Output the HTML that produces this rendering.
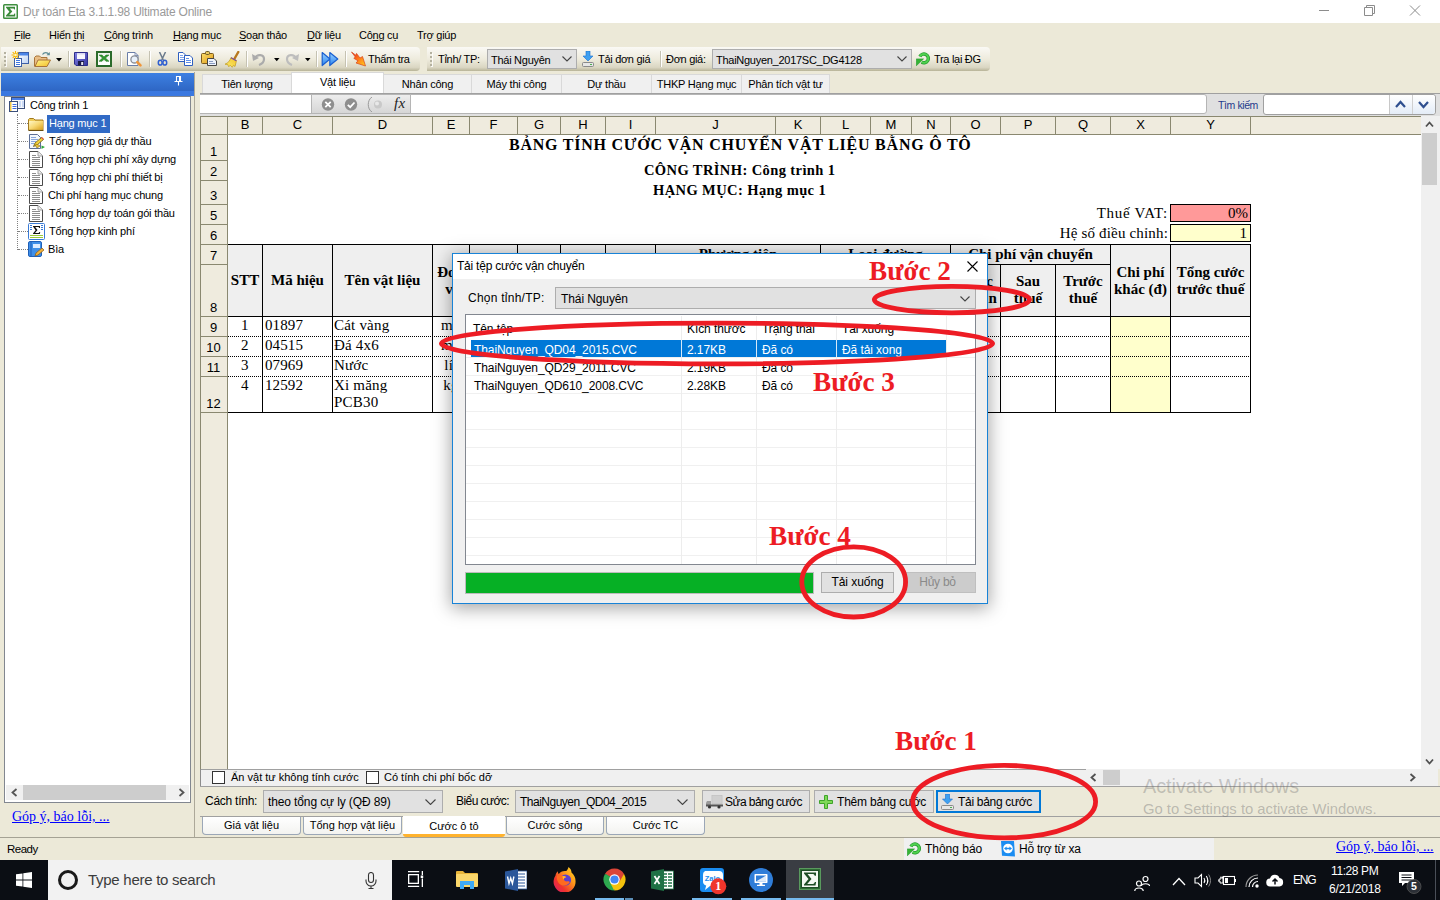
<!DOCTYPE html>
<html lang="vi">
<head>
<meta charset="utf-8">
<title>Dự toán Eta 3.1.1.98 Ultimate Online</title>
<style>
*{box-sizing:border-box;margin:0;padding:0}
html,body{width:1440px;height:900px;overflow:hidden;background:#ECE9D8;font-family:"Liberation Sans",sans-serif;font-size:11px;color:#000}
.a{position:absolute}
.t{position:absolute;white-space:nowrap;line-height:1}
.ui{font-family:"Liberation Sans",sans-serif;font-size:11px}
.seg{font-family:"DejaVu Sans","Liberation Sans",sans-serif}
.ser{font-family:"Liberation Serif",serif}
u{text-decoration:underline}
/* title bar */
#titlebar{left:0;top:0;width:1440px;height:23px;background:#fff}
/* menu */
#menubar{left:0;top:23px;width:1440px;height:24px;background:#ECE9D8}
#menubar .t{top:7px;font-size:11px;letter-spacing:-.25px}
/* toolbars */
.tb{position:absolute;top:47px;height:24px;border-radius:0 4px 4px 0;background:linear-gradient(#FAF9F5 0%,#EEEBDD 50%,#DAD6C2 85%,#B8B498 100%)}
.tbsep{position:absolute;top:4px;width:1px;height:16px;background:#C5C2B2;border-right:1px solid #fff;box-sizing:content-box}
.grip{position:absolute;left:3px;top:5px;width:2px;height:14px;background:repeating-linear-gradient(#B4B1A0 0 2px,transparent 2px 4px);box-shadow:1px 1px 0 rgba(255,255,255,.8)}
.combo{position:absolute;background:#E1E1E1;border:1px solid #ADADAD;font-size:11px;letter-spacing:-.27px;white-space:nowrap;overflow:hidden}
.combo span{position:absolute;left:3px;top:5px;line-height:1}
.combo svg{position:absolute;right:4px;top:6px}
/* left panel */
#lp-head{left:1px;top:73px;width:193px;height:18px;background:linear-gradient(#3D80E2,#2E66C4)}
#lp-strip{left:1px;top:91px;width:193px;height:5px;background:#3A78E0}
#tree{left:4px;top:96px;width:187px;height:707px;background:#fff;border:1px solid #828790}
.ti{position:absolute;white-space:nowrap;font-size:11px;line-height:1;letter-spacing:-.2px}
/* main tabs */
.mt{position:absolute;top:74px;height:19px;background:#F0F0F0;border:1px solid #D9D9D9;border-bottom:none;text-align:center;font-size:11px;line-height:18px;white-space:nowrap;letter-spacing:-.2px}
.mt.act{top:72px;height:21px;background:#fff;line-height:18px}
/* grid */
#grid{left:200px;top:116px;width:1221px;height:653px;background:#fff;box-shadow:inset 1px 1px 0 #8A8870}
.ch{position:absolute;top:0;height:18px;background:#EFEBDE;border-right:1px solid #8A8870;border-bottom:1px solid #8A8870;text-align:center;font-size:13px;line-height:18px}
.rh{position:absolute;left:0;width:28px;background:#EFEBDE;border-right:1px solid #8A8870;border-bottom:1px solid #8A8870;text-align:center;font-size:13px}
.rh span{position:absolute;left:0;right:0;bottom:2px;line-height:1}
.hc{position:absolute;background:#EFEFEF;border-right:2px solid #000;border-bottom:2px solid #000;font-family:"Liberation Serif",serif;font-weight:bold;font-size:15px;text-align:center;line-height:17px}
.dc{position:absolute;font-family:"Liberation Serif",serif;font-size:15px;line-height:1;white-space:nowrap;letter-spacing:.3px}
.vl{position:absolute;width:2px;background:#000}
.hl{position:absolute;height:2px;background:#000}
.dl{position:absolute;height:0;border-top:1px dotted #000}
/* bottom */
.bt{position:absolute;top:817px;height:18px;background:linear-gradient(#fff,#F3F3F0);border:1px solid #9BA7B7;border-top:none;border-radius:0 0 4px 4px;text-align:center;font-size:11px;line-height:17px;letter-spacing:0}
.btn{position:absolute;top:790px;height:23px;background:#E1E1E1;border:1px solid #ADADAD;font-size:11.5px;white-space:nowrap}
.b12{font-size:12px;letter-spacing:-.25px}
/* dialog */
#dlg{left:452px;top:253px;width:536px;height:351px;background:#F0F0F0;border:1px solid #1883D7;box-shadow:0 3px 17px 1px rgba(0,0,0,.36)}
.lvl{position:absolute;background:#F0F0F0}
.lr{position:absolute;font-size:12px;letter-spacing:-.08px;line-height:1;white-space:nowrap}
/* annotations */
.step{position:absolute;font-family:"Liberation Serif",serif;font-weight:bold;font-size:27.2px;color:#ED1C24;line-height:1;white-space:nowrap}
/* taskbar */
#taskbar{left:0;top:860px;width:1440px;height:40px;background:#0B0E14}
</style>
</head>
<body>
<!-- TITLE BAR -->
<div id="titlebar" class="a">
  <svg class="a" style="left:3px;top:4px" width="15" height="15" viewBox="0 0 15 15"><rect x=".75" y=".75" width="13.500" height="13.500" rx=".8" fill="#fff" stroke="#3F8F3F" stroke-width="1.500"/><path d="M3 2.800H12V5.600H11.300L10.600 4.400H6.800L9.300 7.600L6.200 10.800H10.800L11.400 9.400H12.200V12.400H3V11.500L6.400 7.700L3 3.600Z" fill="#3A8A3A"/></svg>
  <div class="t" id="wttl" style="left:23px;top:6px;font-size:12px;color:#9A9A9A;letter-spacing:-.22px">Dự toán Eta 3.1.1.98 Ultimate Online</div>
  <svg class="a" style="left:1310px;top:0" width="130" height="23" viewBox="0 0 130 23"><g stroke="#8C8C8C" stroke-width="1" fill="none"><path d="M9 10.5h10"/><path d="M54.5 7.5h8v8h-8z"/><path d="M56.5 7.5v-2h8v8h-2"/><path d="M100 5.5l10 10M110 5.5l-10 10"/></g></svg>
</div>
<!-- MENU BAR -->
<div id="menubar" class="a">
  <div class="t" style="left:14px"><u>F</u>ile</div>
  <div class="t" style="left:49px">Hiển <u>t</u>hị</div>
  <div class="t" style="left:104px"><u>C</u>ông trình</div>
  <div class="t" style="left:173px"><u>H</u>ạng mục</div>
  <div class="t" style="left:239px"><u>S</u>oạn thảo</div>
  <div class="t" style="left:307px"><u>D</u>ữ liệu</div>
  <div class="t" style="left:359px">Cô<u>n</u>g cụ</div>
  <div class="t" style="left:417px">Trợ <u>g</u>iúp</div>
</div>
<!-- TOOLBAR 1 -->
<div class="tb" style="left:1px;width:419px">
  <div class="grip"></div>
  <!-- new -->
  <svg class="a" style="left:10px;top:4px" width="18" height="16" viewBox="0 0 18 16"><defs><linearGradient id="nwg" x1="0" y1="0" x2="1" y2="1"><stop offset="0" stop-color="#fff"/><stop offset="1" stop-color="#BCD2F4"/></linearGradient></defs><rect x="7.500" y="1.500" width="10" height="11" fill="url(#nwg)" stroke="#3C5FA8"/><rect x="8" y="2" width="9" height="2.500" fill="#4C86E8"/><rect x="3.500" y="7.500" width="7" height="8" fill="#fff" stroke="#3C5FA8"/><path d="M5 9.500h4M5 11.500h4M5 13.500h4" stroke="#3F78E0"/><path d="M4.500 0v8M.5 4h8M1.700 1.200l5.600 5.600M7.300 1.200l-5.600 5.600" stroke="#F7B500" stroke-width="1.100"/><circle cx="4.500" cy="4" r="1.300" fill="#FFF6C0"/></svg>
  <!-- open -->
  <svg class="a" style="left:33px;top:4px" width="17" height="17" viewBox="0 0 17 17"><defs><linearGradient id="ofg" x1="0" y1="0" x2="1" y2="1"><stop offset="0" stop-color="#FFF48A"/><stop offset="1" stop-color="#F2BE28"/></linearGradient></defs><path d="M8.500 3.500c1.500-2.500 5-2.500 6.500 0" fill="none" stroke="#5E8C96" stroke-width="1.200"/><path d="M15.800 1v3.300h-3.300z" fill="#5E8C96"/><path d="M.5 15.500v-9l1.500-1.500h3.500l1.500 1.500h6v2.500" fill="#E9BE86" stroke="#A8743A"/><path d="M1 15.500l3-6.500h12.500l-3.500 6.500z" fill="url(#ofg)" stroke="#A8743A"/></svg>
  <svg class="a" style="left:55px;top:11px" width="6" height="4"><path d="M0 0h6l-3 3.500z" fill="#000"/></svg>
  <div class="tbsep" style="left:67px"></div>
  <!-- save -->
  <svg class="a" style="left:73px;top:5px" width="14" height="14" viewBox="0 0 14 14"><defs><linearGradient id="svg1" x1="0" y1="0" x2="1" y2="1"><stop offset="0" stop-color="#8484E6"/><stop offset="1" stop-color="#35359E"/></linearGradient></defs><path d="M.5.500h13v13h-11.500l-1.500-1.500z" fill="url(#svg1)" stroke="#2C2C8A"/><rect x="3" y="1" width="8" height="6" fill="#F7F7FD"/><rect x="3" y="1" width="8" height="1.500" fill="#D8D8F0"/><rect x="4" y="9" width="6" height="4.500" fill="#1B1B4A"/><rect x="7.200" y="10" width="2" height="3" fill="#E6E6F2"/></svg>
  <!-- excel -->
  <svg class="a" style="left:95px;top:4px" width="16" height="16" viewBox="0 0 16 16"><rect x="1" y="1" width="14" height="14" fill="#EFF6EE" stroke="#2B6B2B" stroke-width="2"/><rect x="2" y="10.500" width="12" height="3.500" fill="#fff"/><path d="M3 4h3l2 2 2-2h3l-3.500 3 3.500 3.300h-3l-2-2-2 2h-3l3.500-3.300z" fill="#2F9A2F" stroke="#1E6E1E" stroke-width=".5"/></svg>
  <div class="tbsep" style="left:119px"></div>
  <!-- preview -->
  <svg class="a" style="left:125px;top:4px" width="17" height="17" viewBox="0 0 17 17"><path d="M1.500 1.500h7.500l3 3v10h-10.500z" fill="#fff" stroke="#6A7EA8"/><path d="M9 1.500v3h3" fill="none" stroke="#6A7EA8" stroke-width=".8"/><circle cx="8.500" cy="8.400" r="3.600" fill="#E8F1FB" stroke="#8A8E96" stroke-width="1.300"/><path d="M11.300 11.200l3.200 3.200" stroke="#F0963A" stroke-width="2.600" stroke-linecap="round"/></svg>
  <div class="tbsep" style="left:148px"></div>
  <!-- cut -->
  <svg class="a" style="left:156px;top:5px" width="11" height="15" viewBox="0 0 11 15"><path d="M2.500 0l3.800 8M8.500 0l-3.800 8" stroke="#6A7A8C" stroke-width="1.500" fill="none"/><ellipse cx="3.200" cy="10.700" rx="1.900" ry="2.400" fill="none" stroke="#2F5FD0" stroke-width="1.500"/><ellipse cx="7.800" cy="10.700" rx="1.900" ry="2.400" fill="none" stroke="#2F5FD0" stroke-width="1.500"/></svg>
  <!-- copy -->
  <svg class="a" style="left:176px;top:5px" width="17" height="15" viewBox="0 0 17 15"><path d="M1.500.500h4.500l2 2v7h-6.500z" fill="#fff" stroke="#2F5FC0"/><path d="M3 3.500h3M3 5.500h4M3 7.500h4" stroke="#7FA3E8"/><path d="M7.500 3.500h5.500l2.500 2.500v7.500h-8z" fill="#fff" stroke="#2F5FC0"/><path d="M9 6.500h3M9 8.500h5M9 10.500h5" stroke="#5F8FE8"/></svg>
  <!-- paste -->
  <svg class="a" style="left:199px;top:4px" width="18" height="16" viewBox="0 0 18 16"><defs><linearGradient id="pg" x1="0" y1="0" x2="1" y2="1"><stop offset="0" stop-color="#FBDD6A"/><stop offset="1" stop-color="#DE9A1A"/></linearGradient></defs><rect x="1.500" y="2.500" width="12" height="10" rx="1" fill="url(#pg)" stroke="#7A5A1E"/><rect x="5.500" y=".5" width="4" height="3" rx="1" fill="#E8C860" stroke="#6A5A2A"/><path d="M7.500 7.500h6.500l2.500 2.500v4.500h-9z" fill="#EEF3FB" stroke="#444"/><path d="M9 10.500h4M9 12.500h6" stroke="#8A9CC0"/></svg>
  <!-- brush -->
  <svg class="a" style="left:223px;top:4px" width="17" height="17" viewBox="0 0 17 17"><defs><linearGradient id="bg1" x1="1" y1="0" x2="0" y2="1"><stop offset="0" stop-color="#F2C230"/><stop offset="1" stop-color="#FBEE6A"/></linearGradient></defs><path d="M14.300 1l-4 7" stroke="#B8781E" stroke-width="2.400" stroke-linecap="round"/><path d="M7 6.500l5.500 3-1.500 6-1.500-1.200-1.300 2-1.700-1.800-2 1-.8-2-2.700-.3c3-1 5-3.500 6-6.700z" fill="url(#bg1)" stroke="#C09A18" stroke-width=".7"/><path d="M7 6.800l5.300 2.900" stroke="#7A4AA0" stroke-width="1.300"/></svg>
  <div class="tbsep" style="left:245px"></div>
  <!-- undo -->
  <svg class="a" style="left:251px;top:5px" width="15" height="14" viewBox="0 0 15 14"><path d="M3 6c2-4 9-4 9 1 0 3-2 5-5 6" fill="none" stroke="#ABABAB" stroke-width="2.200"/><path d="M0 2l1 7 6-3z" fill="#ABABAB"/></svg>
  <svg class="a" style="left:273px;top:11px" width="6" height="4"><path d="M0 0h5.500l-2.750 3.200z" fill="#000"/></svg>
  <!-- redo -->
  <svg class="a" style="left:283px;top:5px" width="15" height="14" viewBox="0 0 15 14"><path d="M12 6c-2-4-9-4-9 1 0 3 2 5 5 6" fill="none" stroke="#BDBDBD" stroke-width="2.200"/><path d="M15 2l-1 7-6-3z" fill="#BDBDBD"/></svg>
  <svg class="a" style="left:304px;top:11px" width="6" height="4"><path d="M0 0h5.500l-2.750 3.200z" fill="#000"/></svg>
  <div class="tbsep" style="left:315px"></div>
  <!-- ff -->
  <svg class="a" style="left:320px;top:4px" width="18" height="16" viewBox="0 0 18 16"><defs><linearGradient id="ffb" x1="0" y1="0" x2="0" y2="1"><stop offset="0" stop-color="#9AD4FF"/><stop offset="1" stop-color="#2A82F0"/></linearGradient></defs><path d="M1.200 1.500l7.800 6.500-7.800 6.500z" fill="url(#ffb)" stroke="#1A5FD0" stroke-width="1.200" stroke-linejoin="round"/><path d="M8.800 1.500l8 6.500-8 6.500z" fill="url(#ffb)" stroke="#1A5FD0" stroke-width="1.200" stroke-linejoin="round"/></svg>
  <div class="tbsep" style="left:344px"></div>
  <!-- tham tra -->
  <svg class="a" style="left:349px;top:4px" width="17" height="16" viewBox="0 0 17 16"><defs><linearGradient id="ttg" x1="0" y1="0" x2="1" y2="1"><stop offset="0" stop-color="#E8281A"/><stop offset=".5" stop-color="#FF7A1A"/><stop offset="1" stop-color="#FFD21E"/></linearGradient></defs><path d="M1.500 1l4.200 3.200.8-1.800 3.500 4.600 2.500-1.500 3 9.500-9.500-3 2-2.200-4.200-2.500 1.500-1.300z" fill="url(#ttg)" stroke="#D8431A" stroke-width=".7" stroke-linejoin="round"/></svg>
  <div class="t" style="left:367px;top:7px;font-size:11px;letter-spacing:-.3px">Thẩm tra</div>
</div>
<!-- TOOLBAR 2 -->
<div class="tb" style="left:427px;width:563px">
  <div class="grip"></div>
  <div class="t" style="left:11px;top:7px;font-size:11px;letter-spacing:-.3px">Tỉnh/ TP:</div>
  <div class="combo" style="left:60px;top:2px;width:90px;height:20px"><span>Thái Nguyên</span><svg width="10" height="6" viewBox="0 0 10 6"><path d="M.5.500l4.500 4.500 4.500-4.500" fill="none" stroke="#444" stroke-width="1.100"/></svg></div>
  <svg class="a" style="left:155px;top:4px" width="12" height="16" viewBox="0 0 12 16"><path d="M4 0h4v5h3l-5 5-5-5h3z" fill="#3FA0F0" stroke="#1A6FD0" stroke-width=".6"/><rect x=".5" y="11.500" width="11" height="4" rx="1" fill="#E6E6E6" stroke="#8A8A8A"/><rect x="8" y="13" width="2" height="1" fill="#4CAF50"/></svg>
  <div class="t" style="left:171px;top:7px;font-size:11px;letter-spacing:-.3px">Tải đơn giá</div>
  <div class="tbsep" style="left:233px"></div>
  <div class="t" style="left:239px;top:7px;font-size:11px;letter-spacing:-.3px">Đơn giá:</div>
  <div class="combo" style="left:285px;top:2px;width:200px;height:20px"><span>ThaiNguyen_2017SC_DG4128</span><svg width="10" height="6" viewBox="0 0 10 6"><path d="M.5.500l4.500 4.500 4.500-4.500" fill="none" stroke="#444" stroke-width="1.100"/></svg></div>
  <svg class="a" style="left:489px;top:5px" width="14" height="14" viewBox="0 0 14 14"><path d="M3.910 4.540A4.400 4.400 0 1 1 5.700 10.210" fill="none" stroke="#239A2C" stroke-width="3.400"/><path d="M3.910 4.540A4.400 4.400 0 1 1 5.700 10.210" fill="none" stroke="#4FD04F" stroke-width="2"/><path d="M.3 6.900h7.200l-7.200 6.900z" fill="#35B335" stroke="#239A2C" stroke-width=".6"/></svg>
  <div class="t" style="left:507px;top:7px;font-size:11px;letter-spacing:-.3px">Tra lại ĐG</div>
</div>
<!--TOOLBARS_END-->
<!-- LEFT PANEL -->
<div class="a" style="left:0;top:72px;width:195px;height:766px;border-right:1px solid #ACA899"></div>
<div id="lp-head" class="a"><svg class="a" style="left:173px;top:3px" width="10" height="10" viewBox="0 0 10 10"><path d="M2.500.500h4v5h-4zM5.500.500v5M.500 5.500h8M4.500 6v3.500" stroke="#fff" stroke-width="1.100" fill="none"/></svg></div>
<div id="lp-strip" class="a"></div>
<div id="tree" class="a">
  <div class="a" style="left:0;top:-1px">
  <!-- dotted lines -->
  <div class="a" style="left:12px;top:18px;width:0;height:136px;border-left:1px dotted #808080"></div>
  <div class="a" style="left:13px;top:27px;width:10px;border-top:1px dotted #808080"></div>
  <div class="a" style="left:13px;top:45px;width:10px;border-top:1px dotted #808080"></div>
  <div class="a" style="left:13px;top:63px;width:10px;border-top:1px dotted #808080"></div>
  <div class="a" style="left:13px;top:81px;width:10px;border-top:1px dotted #808080"></div>
  <div class="a" style="left:13px;top:99px;width:10px;border-top:1px dotted #808080"></div>
  <div class="a" style="left:13px;top:117px;width:10px;border-top:1px dotted #808080"></div>
  <div class="a" style="left:13px;top:135px;width:10px;border-top:1px dotted #808080"></div>
  <div class="a" style="left:13px;top:153px;width:10px;border-top:1px dotted #808080"></div>
  <!-- root icon -->
  <svg class="a" style="left:4px;top:1px" width="17" height="16" viewBox="0 0 17 16"><rect x="2.500" y=".5" width="13" height="11" fill="#F4F7FC" stroke="#3B4F7A"/><rect x="3" y="1" width="12" height="2" fill="#4A7FE8"/><rect x="10" y="4" width="2" height="6" fill="#C9D9F5"/><rect x="13" y="4" width="2" height="6" fill="#C9D9F5"/><rect x=".5" y="4.500" width="8" height="10" fill="#fff" stroke="#3B4F7A"/><rect x="1" y="5" width="1.500" height="9" fill="#F2C84B"/><path d="M3.500 7.500h4M3.500 9.500h4M3.500 11.500h4" stroke="#3E6BE0"/></svg>
  <div class="ti" style="left:25px;top:4px">Công trình 1</div>
  <!-- folder -->
  <svg class="a" style="left:23px;top:22px" width="16" height="13" viewBox="0 0 16 13"><defs><linearGradient id="fg" x1="0" y1="0" x2="1" y2="1"><stop offset="0" stop-color="#FFF6C4"/><stop offset=".5" stop-color="#F7D873"/><stop offset="1" stop-color="#D9A01E"/></linearGradient></defs><path d="M.5 12v-10.500l1-1h4l1.500 1.500h8v10z" fill="#F0CC5A" stroke="#A37A1E"/><rect x="1" y="3" width="14" height="8.500" fill="url(#fg)"/><path d="M.5 12.500h15" stroke="#6B4E10"/></svg>
  <div class="a" style="left:42px;top:19px;width:63px;height:18px;background:#316AC5"></div>
  <div class="ti" style="left:44px;top:22px;color:#fff">Hạng mục 1</div>
  <!-- edit doc -->
  <svg class="a" style="left:24px;top:38px" width="17" height="16" viewBox="0 0 17 16"><path d="M.5.500h8l3 3v11h-11z" fill="#F3F7FD" stroke="#5D6F96"/><path d="M2 3.500h5M2 5.500h7M2 7.500h5M2 9.500h3" stroke="#88A6DC"/><path d="M4.500 12.500l1.500-3.500 6.500-5.500 2 2-6.500 5.500z" fill="#F2D03C" stroke="#6A5A10" stroke-width=".8"/><path d="M12 3.800l1-.9 2 2-1 .9z" fill="#E0523A"/><path d="M6 11c1.500-1 3.500-.5 5 1l-3 2z" fill="#E8C23A" stroke="#8A6A10" stroke-width=".6"/><path d="M12.500 11.500l3.500 1.500-3.500 2z" fill="#2EA83A"/></svg>
  <div class="ti" style="left:44px;top:40px">Tổng hợp giá dự thầu</div>
  <!-- docs -->
  <svg class="a" style="left:24px;top:55px" width="14" height="17" viewBox="0 0 14 17"><path d="M.5.500h8.500l4.500 4.500v11.500h-13z" fill="#fff" stroke="#4A4A4A"/><path d="M9 .5v4.500h4.500" fill="#EDEDED" stroke="#8A8A8A" stroke-width=".8"/><path d="M3 4.500h4M3 6.500h8M3 8.500h8M3 10.500h8M3 12.500h8M3 14.500h8" stroke="#8C8C8C"/></svg>
  <div class="ti" style="left:44px;top:58px">Tổng hợp chi phí xây dựng</div>
  <svg class="a" style="left:24px;top:73px" width="14" height="17" viewBox="0 0 14 17"><path d="M.5.500h8.500l4.500 4.500v11.500h-13z" fill="#fff" stroke="#4A4A4A"/><path d="M9 .5v4.500h4.500" fill="#EDEDED" stroke="#8A8A8A" stroke-width=".8"/><path d="M3 4.500h4M3 6.500h8M3 8.500h8M3 10.500h8M3 12.500h8M3 14.500h8" stroke="#8C8C8C"/></svg>
  <div class="ti" style="left:44px;top:76px">Tổng hợp chi phí thiết bị</div>
  <svg class="a" style="left:24px;top:91px" width="14" height="17" viewBox="0 0 14 17"><path d="M.5.500h8.500l4.500 4.500v11.500h-13z" fill="#fff" stroke="#4A4A4A"/><path d="M9 .5v4.500h4.500" fill="#EDEDED" stroke="#8A8A8A" stroke-width=".8"/><path d="M3 4.500h4M3 6.500h8M3 8.500h8M3 10.500h8M3 12.500h8M3 14.500h8" stroke="#8C8C8C"/></svg>
  <div class="ti" style="left:43px;top:94px">Chi phí hạng mục chung</div>
  <svg class="a" style="left:24px;top:109px" width="14" height="17" viewBox="0 0 14 17"><path d="M.5.500h8.500l4.500 4.500v11.500h-13z" fill="#fff" stroke="#4A4A4A"/><path d="M9 .5v4.500h4.500" fill="#EDEDED" stroke="#8A8A8A" stroke-width=".8"/><path d="M3 4.500h4M3 6.500h8M3 8.500h8M3 10.500h8M3 12.500h8M3 14.500h8" stroke="#8C8C8C"/></svg>
  <div class="ti" style="left:44px;top:112px">Tổng hợp dự toán gói thầu</div>
  <!-- sigma -->
  <svg class="a" style="left:23px;top:127px" width="17" height="17" viewBox="0 0 17 17"><rect x=".5" y=".5" width="16" height="16" rx="1" fill="#fff" stroke="#3A7BD5"/><path d="M2 2.500h2M2 4.500h2M2 6.500h2M13 2.500h2M13 4.500h2M13 6.500h2" stroke="#3A7BD5"/><path d="M5 3h7v2h-.8c-.1-.7-.5-1-1.300-1H7.200l2.300 3-2.500 3h3c.8 0 1.200-.3 1.400-1.100h.8l-.3 2.100H5v-.6l2.600-3.200L5 3.600z" fill="#111"/><path d="M2 12.500h13M2 14.500h13" stroke="#9CCB3B"/></svg>
  <div class="ti" style="left:44px;top:130px">Tổng hợp kinh phí</div>
  <!-- bia -->
  <svg class="a" style="left:23px;top:145px" width="17" height="17" viewBox="0 0 17 17"><rect x=".5" y=".5" width="13" height="15" rx="1.500" fill="#3F8FE8" stroke="#1E5FB8"/><path d="M3 .5v15" stroke="#1E5FB8"/><rect x="5" y="3" width="7" height="4" fill="#DCEBFF"/><path d="M7 15l1-3 6-5 2 2-6 5z" fill="#F0B03A" stroke="#8A5A12" stroke-width=".7"/></svg>
  <div class="ti" style="left:43px;top:148px">Bìa</div>
  </div>
  <!-- hscroll -->
  <div class="a" style="left:1px;top:688px;width:183px;height:15px;background:#F0F0F0"></div>
  <div class="a" style="left:18px;top:688px;width:143px;height:15px;background:#CDCDCD"></div>
  <svg class="a" style="left:6px;top:691px" width="7" height="9" viewBox="0 0 7 9"><path d="M5.500 1l-4 3.500 4 3.500" fill="none" stroke="#555" stroke-width="1.800"/></svg>
  <svg class="a" style="left:173px;top:691px" width="7" height="9" viewBox="0 0 7 9"><path d="M1.500 1l4 3.500-4 3.500" fill="none" stroke="#555" stroke-width="1.800"/></svg>
</div>
<div class="t ser" style="left:12px;top:810px;font-size:14px;color:#0000FF;text-decoration:underline">Góp ý, báo lỗi, ...</div>

<!-- MAIN TABS -->
<div class="a" style="left:200px;top:93px;width:1240px;height:1px;background:#A0A0A0"></div>
<div class="mt" style="left:202px;width:90px">Tiên lượng</div>
<div class="mt" style="left:383px;width:89px">Nhân công</div>
<div class="mt" style="left:471px;width:91px">Máy thi công</div>
<div class="mt" style="left:561px;width:91px">Dự thầu</div>
<div class="mt" style="left:651px;width:91px">THKP Hạng mục</div>
<div class="mt" style="left:741px;width:89px">Phân tích vật tư</div>
<div class="mt act" style="left:291px;width:93px">Vật liệu</div>
<!-- FORMULA BAR -->
<div class="a" style="left:200px;top:94px;width:1240px;height:22px;background:#E0E0E0"></div>
<div class="a" style="left:200px;top:94px;width:112px;height:20px;background:#fff;border:1px solid #B5B5B5;border-left:none"></div>
<div class="a" style="left:311px;top:94px;width:100px;height:20px;background:linear-gradient(#EDEDED,#D6D6D6);border:1px solid #B5B5B5"></div>
<svg class="a" style="left:320px;top:97px" width="90" height="15" viewBox="0 0 90 15"><circle cx="8" cy="7.500" r="6.200" fill="#8E8E8E"/><path d="M5.300 4.800l5.400 5.400M10.700 4.800l-5.400 5.400" stroke="#fff" stroke-width="1.800"/><circle cx="31" cy="7.500" r="6.200" fill="#8E8E8E"/><path d="M27.800 7.800l2.400 2.400 4.300-4.700" fill="none" stroke="#fff" stroke-width="1.800"/><path d="M52 0c-5 3-5 12 0 15" fill="none" stroke="#9A9A9A"/><circle cx="58" cy="7.500" r="4" fill="#C9C9C9"/><circle cx="57" cy="6.500" r="2" fill="#E8E8E8"/></svg>
<div class="t ser" style="left:394px;top:96px;font-size:15px;font-style:italic;color:#222;letter-spacing:.3px">fx</div>
<div class="a" style="left:410px;top:94px;width:797px;height:20px;background:#fff;border:1px solid #B5B5B5;border-radius:0 3px 3px 0"></div>
<div class="t" style="left:1218px;top:100px;font-size:10.500px;letter-spacing:-.4px;color:#1F3B8C">Tìm kiếm</div>
<div class="a" style="left:1263px;top:94px;width:173px;height:21px;background:#fff;border:1px solid #A0A0A0;border-radius:3px"></div>
<div class="a" style="left:1389px;top:95px;width:46px;height:19px;background:linear-gradient(#fff,#E4ECF7);border-left:1px solid #C8C8C8;border-radius:0 3px 3px 0"></div>
<div class="a" style="left:1412px;top:95px;width:1px;height:19px;background:#D0D0D0"></div>
<svg class="a" style="left:1395px;top:100px" width="36" height="9" viewBox="0 0 36 9"><path d="M1 7l4.500-5 4.500 5" fill="none" stroke="#2F4F8F" stroke-width="2.200"/><path d="M24 2l4.500 5 4.500-5" fill="none" stroke="#2F4F8F" stroke-width="2.200"/></svg>


<!--GRID_S--><div id="grid" class="a">
<div class="a" style="left:0;top:0;width:1221px;height:19px;background:#EFEBDE;border-bottom:1px solid #8A8870"></div>
<div class="a" style="left:0;top:0;width:28px;height:653px;background:#EFEBDE;border-right:1px solid #8A8870"></div>
<div class="ch" style="left:0;width:28px;height:19px"></div>
<div class="ch" style="left:28px;width:35px;height:19px">B</div>
<div class="ch" style="left:63px;width:70px;height:19px">C</div>
<div class="ch" style="left:133px;width:100px;height:19px">D</div>
<div class="ch" style="left:233px;width:37px;height:19px">E</div>
<div class="ch" style="left:270px;width:48px;height:19px">F</div>
<div class="ch" style="left:318px;width:43px;height:19px">G</div>
<div class="ch" style="left:361px;width:45px;height:19px">H</div>
<div class="ch" style="left:406px;width:50px;height:19px">I</div>
<div class="ch" style="left:456px;width:120px;height:19px">J</div>
<div class="ch" style="left:576px;width:45px;height:19px">K</div>
<div class="ch" style="left:621px;width:50px;height:19px">L</div>
<div class="ch" style="left:671px;width:41px;height:19px">M</div>
<div class="ch" style="left:712px;width:39px;height:19px">N</div>
<div class="ch" style="left:751px;width:50px;height:19px">O</div>
<div class="ch" style="left:801px;width:55px;height:19px">P</div>
<div class="ch" style="left:856px;width:55px;height:19px">Q</div>
<div class="ch" style="left:911px;width:60px;height:19px">X</div>
<div class="ch" style="left:971px;width:80px;height:19px">Y</div>
<div class="rh" style="top:19px;height:26px"><span>1</span></div>
<div class="rh" style="top:45px;height:20px"><span>2</span></div>
<div class="rh" style="top:65px;height:24px"><span>3</span></div>
<div class="rh" style="top:89px;height:20px"><span>5</span></div>
<div class="rh" style="top:109px;height:20px"><span>6</span></div>
<div class="rh" style="top:129px;height:20px"><span>7</span></div>
<div class="rh" style="top:149px;height:52px"><span>8</span></div>
<div class="rh" style="top:201px;height:20px"><span>9</span></div>
<div class="rh" style="top:221px;height:20px"><span>10</span></div>
<div class="rh" style="top:241px;height:20px"><span>11</span></div>
<div class="rh" style="top:261px;height:36px"><span>12</span></div>
<div class="t ser" id="ttl1" style="left:309px;top:21px;font-size:16px;font-weight:bold;letter-spacing:.77px">BẢNG TÍNH CƯỚC VẬN CHUYỂN VẬT LIỆU BẰNG Ô TÔ</div>
<div class="t ser" id="ttl2" style="left:444px;top:47px;font-size:14.5px;font-weight:bold;letter-spacing:.4px">CÔNG TRÌNH: Công trình 1</div>
<div class="t ser" id="ttl3" style="left:453px;top:67px;font-size:14.5px;font-weight:bold;letter-spacing:.4px">HẠNG MỤC: Hạng mục 1</div>
<div class="t ser" id="vat" style="right:253px;top:90px;font-size:15px;letter-spacing:.7px">Thuế VAT:</div>
<div class="t ser" id="hsd" style="right:253px;top:110px;font-size:15px;letter-spacing:.17px">Hệ số điều chỉnh:</div>
<div class="a ser" style="left:970px;top:88px;width:81px;height:18px;background:#FF9999;border:1px solid #000;font-size:15px;text-align:right;line-height:16px;padding-right:2px">0%</div>
<div class="a ser" style="left:970px;top:108px;width:81px;height:18px;background:#FFFFCC;border:1px solid #000;font-size:15px;text-align:right;line-height:17px;padding-right:3px">1</div>
<div class="a" style="left:28px;top:129px;width:1022px;height:71px;background:#EFEFEF"></div>
<div class="a" style="left:911px;top:201px;width:59px;height:95px;background:#FFFFCC"></div>
<div class="a" style="left:28px;top:128px;width:1023px;height:1px;background:#000"></div>
<div class="a" style="left:28px;top:200px;width:1023px;height:1px;background:#000"></div>
<div class="a" style="left:28px;top:296px;width:1023px;height:1px;background:#000"></div>
<div class="a" style="left:455px;top:148px;width:455px;height:1px;background:#000"></div>
<div class="a" style="left:62px;top:128px;width:1px;height:169px;background:#000"></div>
<div class="a" style="left:132px;top:128px;width:1px;height:169px;background:#000"></div>
<div class="a" style="left:232px;top:128px;width:1px;height:169px;background:#000"></div>
<div class="a" style="left:269px;top:128px;width:1px;height:169px;background:#000"></div>
<div class="a" style="left:317px;top:128px;width:1px;height:169px;background:#000"></div>
<div class="a" style="left:360px;top:128px;width:1px;height:169px;background:#000"></div>
<div class="a" style="left:405px;top:128px;width:1px;height:169px;background:#000"></div>
<div class="a" style="left:455px;top:128px;width:1px;height:169px;background:#000"></div>
<div class="a" style="left:620px;top:128px;width:1px;height:169px;background:#000"></div>
<div class="a" style="left:750px;top:128px;width:1px;height:169px;background:#000"></div>
<div class="a" style="left:910px;top:128px;width:1px;height:169px;background:#000"></div>
<div class="a" style="left:970px;top:128px;width:1px;height:169px;background:#000"></div>
<div class="a" style="left:1050px;top:128px;width:1px;height:169px;background:#000"></div>
<div class="a" style="left:575px;top:149px;width:1px;height:148px;background:#000"></div>
<div class="a" style="left:670px;top:149px;width:1px;height:148px;background:#000"></div>
<div class="a" style="left:711px;top:149px;width:1px;height:148px;background:#000"></div>
<div class="a" style="left:800px;top:149px;width:1px;height:148px;background:#000"></div>
<div class="a" style="left:855px;top:149px;width:1px;height:148px;background:#000"></div>
<div class="a" style="left:28px;top:220px;width:1022px;height:1px;background:repeating-linear-gradient(90deg,#000 0 1px,transparent 1px 2px)"></div>
<div class="a" style="left:28px;top:240px;width:1022px;height:1px;background:repeating-linear-gradient(90deg,#000 0 1px,transparent 1px 2px)"></div>
<div class="a" style="left:28px;top:260px;width:1022px;height:1px;background:repeating-linear-gradient(90deg,#000 0 1px,transparent 1px 2px)"></div>
<div class="a ser hx" id=h_stt style="left:28px;top:130px;width:34px;height:69px;display:flex;align-items:center;justify-content:center;text-align:center;font-weight:bold;font-size:15px;line-height:17px;letter-spacing:0px">STT</div>
<div class="a ser hx" id=h_mh style="left:63px;top:130px;width:69px;height:69px;display:flex;align-items:center;justify-content:center;text-align:center;font-weight:bold;font-size:15px;line-height:17px;letter-spacing:0px">Mã hiệu</div>
<div class="a ser hx" id=h_tvl style="left:133px;top:130px;width:99px;height:69px;display:flex;align-items:center;justify-content:center;text-align:center;font-weight:bold;font-size:15px;line-height:17px;letter-spacing:0px">Tên vật liệu</div>
<div class="a ser hx"  style="left:233px;top:130px;width:36px;height:69px;display:flex;align-items:center;justify-content:center;text-align:center;font-weight:bold;font-size:15px;line-height:17px;letter-spacing:0px">Đơn<br>vị</div>
<div class="a ser hx"  style="left:456px;top:129px;width:164px;height:19px;display:flex;align-items:center;justify-content:center;text-align:center;font-weight:bold;font-size:15px;line-height:17px;letter-spacing:0px">Phương tiện</div>
<div class="a ser hx"  style="left:621px;top:129px;width:129px;height:19px;display:flex;align-items:center;justify-content:center;text-align:center;font-weight:bold;font-size:15px;line-height:17px;letter-spacing:0px">Loại đường</div>
<div class="a ser hx" id=h_cpvc style="left:751px;top:129px;width:159px;height:19px;display:flex;align-items:center;justify-content:center;text-align:center;font-weight:bold;font-size:15px;line-height:17px;letter-spacing:0px">Chi phí vận chuyển</div>
<div class="a ser hx"  style="left:751px;top:149px;width:49px;height:50px;display:flex;align-items:center;justify-content:center;text-align:center;font-weight:bold;font-size:15px;line-height:17px;letter-spacing:0px">Cước<br>cơ bản</div>
<div class="a ser hx" id=h_st style="left:801px;top:149px;width:54px;height:50px;display:flex;align-items:center;justify-content:center;text-align:center;font-weight:bold;font-size:15px;line-height:17px;letter-spacing:0px">Sau<br>thuế</div>
<div class="a ser hx" id=h_tt style="left:856px;top:149px;width:54px;height:50px;display:flex;align-items:center;justify-content:center;text-align:center;font-weight:bold;font-size:15px;line-height:17px;letter-spacing:0px">Trước<br>thuế</div>
<div class="a ser hx" id=h_cpk style="left:911px;top:130px;width:59px;height:69px;display:flex;align-items:center;justify-content:center;text-align:center;font-weight:bold;font-size:15px;line-height:17px;letter-spacing:0px">Chi phí<br>khác (đ)</div>
<div class="a ser hx" id=h_tc style="left:971px;top:130px;width:79px;height:69px;display:flex;align-items:center;justify-content:center;text-align:center;font-weight:bold;font-size:15px;line-height:17px;letter-spacing:0px">Tổng cước<br>trước thuế</div>
<div class="dc" style="left:28px;top:202px;width:34px;text-align:center">1</div>
<div class="dc dm" style="left:65px;top:202px;letter-spacing:.1px">01897</div>
<div class="dc dt" style="left:134px;top:202px;line-height:17px;margin-top:-1px;letter-spacing:.2px">Cát vàng</div>
<div class="dc" style="left:233px;top:202px;width:36px;text-align:center">m3</div>
<div class="dc" style="left:28px;top:222px;width:34px;text-align:center">2</div>
<div class="dc dm" style="left:65px;top:222px;letter-spacing:.1px">04515</div>
<div class="dc dt" style="left:134px;top:222px;line-height:17px;margin-top:-1px;letter-spacing:.2px">Đá 4x6</div>
<div class="dc" style="left:233px;top:222px;width:36px;text-align:center">m3</div>
<div class="dc" style="left:28px;top:242px;width:34px;text-align:center">3</div>
<div class="dc dm" style="left:65px;top:242px;letter-spacing:.1px">07969</div>
<div class="dc dt" style="left:134px;top:242px;line-height:17px;margin-top:-1px;letter-spacing:.2px">Nước</div>
<div class="dc" style="left:233px;top:242px;width:36px;text-align:center">lít</div>
<div class="dc" style="left:28px;top:262px;width:34px;text-align:center">4</div>
<div class="dc dm" style="left:65px;top:262px;letter-spacing:.1px">12592</div>
<div class="dc dt" style="left:134px;top:262px;line-height:17px;margin-top:-1px;letter-spacing:.2px">Xi măng<br>PCB30</div>
<div class="dc" style="left:233px;top:262px;width:36px;text-align:center">kg</div>
<div class="a" style="left:0;top:0;width:1221px;height:1px;background:#8A8870"></div>
<div class="a" style="left:0;top:0;width:1px;height:653px;background:#8A8870"></div>
</div>
<div class="a" style="left:1421px;top:116px;width:19px;height:653px;background:#F0F0F0"></div>
<div class="a" style="left:1422px;top:133px;width:15px;height:52px;background:#CDCDCD"></div>
<svg class="a" style="left:1425px;top:121px" width="9" height="7" viewBox="0 0 9 7"><path d="M1 5.500l3.500-4 3.500 4" fill="none" stroke="#505050" stroke-width="1.800"/></svg>
<svg class="a" style="left:1425px;top:758px" width="9" height="7" viewBox="0 0 9 7"><path d="M1 1.500l3.500 4 3.500-4" fill="none" stroke="#505050" stroke-width="1.800"/></svg>
<!--GRID_E-->
<!-- BOTTOM: checkbox row + hscroll -->
<div class="a" style="left:200px;top:769px;width:1238px;height:17px;background:#F0F0F0"></div>
<div class="a" style="left:212px;top:771px;width:13px;height:13px;background:#fff;border:1px solid #333"></div>
<div class="t" style="left:231px;top:772px;font-size:11px">Ẩn vật tư không tính cước</div>
<div class="a" style="left:366px;top:771px;width:13px;height:13px;background:#fff;border:1px solid #333"></div>
<div class="t" style="left:384px;top:772px;font-size:11px">Có tính chi phí bốc dỡ</div>
<div class="a" style="left:1103px;top:770px;width:17px;height:15px;background:#CDCDCD"></div>
<svg class="a" style="left:1090px;top:773px" width="7" height="9" viewBox="0 0 7 9"><path d="M5.500 1l-4 3.500 4 3.500" fill="none" stroke="#505050" stroke-width="1.800"/></svg>
<svg class="a" style="left:1409px;top:773px" width="7" height="9" viewBox="0 0 7 9"><path d="M1.500 1l4 3.500-4 3.500" fill="none" stroke="#505050" stroke-width="1.800"/></svg>
<div class="a" style="left:200px;top:769px;width:886px;height:1px;background:#A0A0A0"></div>
<div class="a" style="left:200px;top:769px;width:1px;height:48px;background:#8C8C8C"></div>
<!-- bottom toolbar -->
<div class="a" style="left:200px;top:786px;width:1240px;height:1px;background:#A0A0A0"></div>
<div class="a" style="left:200px;top:787px;width:1240px;height:29px;background:#ECE9D8"></div>
<div class="a" style="left:200px;top:816px;width:1240px;height:1px;background:#A0A0A0"></div>
<div class="t b12" style="left:205px;top:795px">Cách tính:</div>
<div class="combo" style="left:263px;top:790px;width:180px;height:23px;font-size:12px;letter-spacing:-.12px"><span style="top:5px;left:4px">theo tổng cự ly (QĐ 89)</span><svg style="top:8px;right:6px" width="11" height="6" viewBox="0 0 11 6"><path d="M.5.500l5 5 5-5" fill="none" stroke="#444" stroke-width="1.100"/></svg></div>
<div class="t b12" style="left:456px;top:795px;letter-spacing:-.55px">Biểu cước:</div>
<div class="combo" style="left:515px;top:790px;width:180px;height:23px;font-size:12px;letter-spacing:-.5px"><span style="top:5px;left:4px">ThaiNguyen_QD04_2015</span><svg style="top:8px;right:6px" width="11" height="6" viewBox="0 0 11 6"><path d="M.5.500l5 5 5-5" fill="none" stroke="#444" stroke-width="1.100"/></svg></div>
<div class="btn" style="left:702px;width:108px">
  <svg class="a" style="left:3px;top:4px" width="17" height="14" viewBox="0 0 17 14"><rect x="6" y="0" width="10" height="9" fill="#D8D8D8" stroke="#B0B0B0" stroke-width=".6"/><path d="M8 0v9M10 0v9M12 0v9M14 0v9" stroke="#BEBEBE" stroke-width=".6"/><path d="M1 6h4v4h-5v-2z" fill="#9A9A9A"/><rect x="0" y="9.500" width="17" height="2" fill="#555"/><circle cx="3.500" cy="12" r="1.600" fill="#333"/><circle cx="13" cy="12" r="1.600" fill="#333"/></svg>
  <div class="t b12" style="left:22px;top:5px;letter-spacing:-.55px">Sửa bảng cước</div></div>
<div class="btn" style="left:814px;width:120px">
  <svg class="a" style="left:4px;top:4px" width="14" height="14" viewBox="0 0 14 14"><path d="M5.500 .5h3v5h5v3h-5v5h-3v-5h-5v-3h5z" fill="#7ED957" stroke="#3FA52A"/></svg>
  <div class="t b12" style="left:22px;top:5px;letter-spacing:-.2px">Thêm bảng cước</div></div>
<div class="btn" style="left:936px;width:105px;border:2px solid #0078D7">
  <svg class="a" style="left:3px;top:2px" width="13" height="16" viewBox="0 0 13 16"><path d="M4.500 0h4v5h3l-5 5-5-5h3z" fill="#3FA0F0" stroke="#1A6FD0" stroke-width=".6"/><rect x=".5" y="11.500" width="12" height="4" rx="1" fill="#E6E6E6" stroke="#8A8A8A"/><rect x="9" y="13" width="2" height="1" fill="#4CAF50"/></svg>
  <div class="t b12" style="left:20px;top:4px;letter-spacing:-.3px">Tải bảng cước</div></div>
<!-- bottom tabs -->
<div class="a" style="left:200px;top:817px;width:1240px;height:20px;background:#ECE9D8"></div>
<div class="bt" style="left:202px;width:99px">Giá vật liệu</div>
<div class="bt" style="left:303px;width:99px">Tổng hợp vật liệu</div>
<div class="bt" style="left:506px;width:98px">Cước sông</div>
<div class="bt" style="left:606px;width:99px">Cước TC</div>
<div class="bt" style="left:403px;width:102px;top:816px;height:21px;background:#fff;border:none;border-bottom:3px solid #FFB32E;border-radius:0 0 3px 3px;line-height:20px">Cước ô tô</div>
<!-- Activate Windows watermark -->
<div class="t" style="left:1143px;top:777px;font-size:19.800px;color:rgba(110,110,110,.36)">Activate Windows</div>
<div class="t" style="left:1143px;top:802px;font-size:14.800px;color:rgba(110,110,110,.4)">Go to Settings to activate Windows.</div>
<!-- STATUS BAR -->
<div class="a" style="left:0;top:837px;width:1440px;height:1px;background:#A5A294"></div>
<div class="a" style="left:0;top:838px;width:1440px;height:22px;background:#ECE9D8"></div>
<div class="a" style="left:904px;top:838px;width:310px;height:22px;background:#F0F0F0"></div>
<div class="t b12" style="left:7px;top:844px;font-size:11.500px;letter-spacing:-.5px">Ready</div>
<svg class="a" style="left:907px;top:842px" width="14" height="14" viewBox="0 0 14 14"><path d="M3.910 4.540A4.400 4.400 0 1 1 5.700 10.210" fill="none" stroke="#239A2C" stroke-width="3.400"/><path d="M3.910 4.540A4.400 4.400 0 1 1 5.700 10.210" fill="none" stroke="#4FD04F" stroke-width="2"/><path d="M.3 6.900h7.200l-7.200 6.900z" fill="#35B335" stroke="#239A2C" stroke-width=".6"/></svg>
<div class="t b12" style="left:925px;top:843px;letter-spacing:-.02px">Thông báo</div>
<svg class="a" style="left:1001px;top:841px" width="14" height="16" viewBox="0 0 14 16"><path d="M0 0h13l1 15.500-13-.8z" fill="#1B8DF2"/><circle cx="7" cy="7.500" r="4.800" fill="#fff"/><path d="M3 7.500l2.600-2.100v1.300h2.800v-1.300l2.600 2.100-2.600 2.100v-1.300h-2.800v1.300z" fill="#1B8DF2"/></svg>
<div class="t b12" style="left:1019px;top:843px">Hỗ trợ từ xa</div>
<div class="t ser" style="left:1336px;top:840px;font-size:14px;color:#0000FF;text-decoration:underline">Góp ý, báo lỗi, ...</div>


<!-- TASKBAR -->
<div id="taskbar" class="a">
  <svg class="a" style="left:16px;top:12px" width="16" height="16" viewBox="0 0 16 16"><path d="M0 2.300l6.500-.9v6.200h-6.500zM7.300 1.300l8.700-1.300v7.600h-8.700zM0 8.400h6.500v6.200l-6.500-.9zM7.300 8.400h8.700v7.600l-8.700-1.300z" fill="#fff"/></svg>
  <div class="a" style="left:48px;top:0;width:344px;height:40px;background:#F2F2F2"></div>
  <div class="a" style="left:58px;top:10px;width:20px;height:20px;border:3px solid #1A1A1A;border-radius:50%"></div>
  <div class="t" style="left:88px;top:12px;font-size:15px;letter-spacing:-.27px;color:#3C3C3C">Type here to search</div>
  <svg class="a" style="left:365px;top:12px" width="12" height="17" viewBox="0 0 12 17"><rect x="3.500" y=".5" width="5" height="10" rx="2.500" fill="none" stroke="#333" stroke-width="1.100"/><path d="M1 7.500v1.500a5 5 0 0 0 10 0v-1.500M6 14v2.500M3.500 16.500h5" fill="none" stroke="#333" stroke-width="1.100"/></svg>
  <!-- task view -->
  <svg class="a" style="left:407px;top:11px" width="18" height="17" viewBox="0 0 18 17"><g fill="none" stroke="#fff" stroke-width="1.300"><rect x="1.650" y="3.650" width="9.700" height="8.700"/><path d="M1 .65h11.200M1 15.350h11.200M15.350 0v4M15.350 7.500v8.500"/></g><rect x="13.700" y="4.500" width="2.500" height="2.500" fill="#fff"/></svg>
  <!-- explorer -->
  <svg class="a" style="left:456px;top:10px" width="22" height="19" viewBox="0 0 22 19"><path d="M0 2a1 1 0 0 1 1-1h6l2 2h12a1 1 0 0 1 1 1v2h-22z" fill="#E9B53A"/><rect x="0" y="4" width="22" height="13" rx="1" fill="#FBD76B"/><path d="M4 11h14v8h-4v-4h-6v4h-4z" fill="#3FA9F5"/></svg>
  <!-- word -->
  <svg class="a" style="left:505px;top:9px" width="22" height="22" viewBox="0 0 22 22"><rect x="9" y="2" width="13" height="18" fill="#fff" stroke="#2B579A" stroke-width=".8"/><path d="M12 5h8M12 8h8M12 11h8M12 14h8M12 17h8" stroke="#2B579A" stroke-width="1.200"/><path d="M0 2.500l13-2.500v22l-13-2.500z" fill="#2B579A"/><path d="M2.500 7.500l1.500 7 1.700-5.500 1.700 5.500 1.500-7" fill="none" stroke="#fff" stroke-width="1.400"/></svg>
  <!-- firefox -->
  <svg class="a" style="left:553px;top:7px" width="24" height="25" viewBox="0 0 24 25"><defs><linearGradient id="ffg" x1="1" y1="0" x2="0" y2="1"><stop offset="0" stop-color="#FFE226"/><stop offset=".35" stop-color="#FF9A1A"/><stop offset=".7" stop-color="#F0332E"/><stop offset="1" stop-color="#D81B72"/></linearGradient></defs><path d="M15.500 0c2 1.500 3 3.500 3 5.500 2.500 2 4 5 4 8A11 11 0 1 1 2.500 8.500c.3-1.800 1-3 2.300-4.200 0 1.200.3 2 1 2.700 1.500-2.500 4.500-3.500 7.500-3 1-.8 1.800-2.200 2.200-4z" fill="url(#ffg)"/><circle cx="12.500" cy="13" r="5.600" fill="#5B3FD0"/><path d="M4 8.500c2-1 4.500-.8 6 .8 1.200-.3 2.500 0 3.300.9-1.700.2-2.600 1.200-2.400 2.400.3 1.400 1.800 2 3.400 1.700 1.300-.3 2.200.3 2.500 1-1.500 2.800-5.300 4-8.600 2.600-3-1.300-5-5-4.200-9.400z" fill="#FF6A1F"/><path d="M9.500 9.200c1.300-.4 2.800-.1 3.800 1-1.700.2-2.600 1.200-2.400 2.400-.9-.7-1.500-2-1.400-3.400z" fill="#FFB52E"/></svg>
  <!-- chrome -->
  <svg class="a" style="left:603px;top:8px" width="23" height="23" viewBox="0 0 23 23"><path d="M11.500 11.500L1.970 6A11 11 0 0 1 21.030 6z" fill="#DB4437"/><path d="M11.500 11.500L21.030 6A11 11 0 0 1 11.500 22.500z" fill="#F4C20D"/><path d="M11.500 11.500L11.500 22.500A11 11 0 0 1 1.970 6z" fill="#2DA94F"/><path d="M11.500 6.500h9.200l-4.500 7.800z" fill="#DB4437"/><path d="M15.800 14l-4.600 8.400-4.200-8z" fill="#F4C20D"/><path d="M7.200 14.200L2.300 5.800l4.800 3z" fill="#2DA94F"/><circle cx="11.500" cy="11.500" r="5.200" fill="#fff"/><circle cx="11.500" cy="11.500" r="4.100" fill="#4285F4"/></svg>
  <!-- excel -->
  <svg class="a" style="left:651px;top:9px" width="23" height="22" viewBox="0 0 23 22"><rect x="9" y="2" width="13.500" height="18" fill="#fff" stroke="#1E7145" stroke-width=".8"/><path d="M12 5h4M17 5h4M12 8h4M17 8h4M12 11h4M17 11h4M12 14h4M17 14h4M12 17h4M17 17h4" stroke="#1E7145" stroke-width="1.600"/><path d="M0 2.500l13-2.500v22l-13-2.500z" fill="#1E7145"/><path d="M3.500 7l5 8M8.500 7l-5 8" stroke="#fff" stroke-width="1.700"/></svg>
  <!-- zalo -->
  <svg class="a" style="left:700px;top:7px" width="28" height="28" viewBox="0 0 28 28"><rect x="0" y="1" width="24" height="24" rx="3" fill="#1A8CF0"/><path d="M5 4h14a4 4 0 0 1 4 4v7a4 4 0 0 1-4 4h-9l-5 4 1.200-4.500a4 4 0 0 1-3.200-3.900v-6.600a4 4 0 0 1 2-4z" fill="#fff"/><text x="12.500" y="13.500" font-family="Liberation Sans, sans-serif" font-weight="bold" font-size="7.500" fill="#1A8CF0" text-anchor="middle">Zalo</text><circle cx="18.300" cy="19.300" r="8" fill="#F0352B"/><text x="18.300" y="23.300" font-family="Liberation Serif, serif" font-weight="bold" font-size="12" fill="#fff" text-anchor="middle">1</text></svg>
  <!-- teamviewer-like -->
  <svg class="a" style="left:749px;top:8px" width="24" height="24" viewBox="0 0 24 24"><circle cx="12" cy="12" r="12" fill="#2F7DD8"/><rect x="5.500" y="6" width="13" height="9" rx=".8" fill="#fff"/><path d="M7 7.500h10v6h-10z" fill="#2F7DD8"/><path d="M7 13.500l10-6v6z" fill="#fff" opacity=".85"/><path d="M10.500 15h3v1.800h2.500v1.200h-8v-1.200h2.500z" fill="#fff"/></svg>
  <!-- eta active -->
  <div class="a" style="left:786px;top:0;width:48px;height:40px;background:#3A3D43"></div>
  <svg class="a" style="left:799px;top:8px" width="22" height="22" viewBox="0 0 22 22"><rect x=".5" y=".5" width="21" height="21" fill="#2E6B34" stroke="#5A9A5E"/><rect x="2.500" y="2.500" width="17" height="17" fill="#F4F8F2" stroke="#1E4D25"/><path d="M5 4.500h12v3.300h-1.300c-.3-1.400-.9-1.900-2.400-1.900H8.500l4 5.100-4.300 5.100h5c1.500 0 2.200-.6 2.600-2.100h1.300l-.6 3.500H5v-1l4.500-5.500L5 5.500z" fill="#1E4D25"/></svg>
  <div class="a" style="left:595px;top:38px;width:29px;height:2px;background:#76B9ED"></div>
  <div class="a" style="left:625px;top:38px;width:8px;height:2px;background:#5C8FB8"></div>
  <div class="a" style="left:692px;top:38px;width:40px;height:2px;background:#76B9ED"></div>
  <div class="a" style="left:741px;top:38px;width:40px;height:2px;background:#76B9ED"></div>
  <div class="a" style="left:786px;top:38px;width:48px;height:2px;background:#76B9ED"></div>
  <!-- tray -->
  <svg class="a" style="left:1134px;top:15px" width="17" height="17" viewBox="0 0 17 17"><g fill="none" stroke="#fff" stroke-width="1.200"><circle cx="11.500" cy="4" r="2.500"/><path d="M7.500 11c0-3 8-3 8 0"/><circle cx="5" cy="8.500" r="2.500"/><path d="M.8 16c0-4 8.400-4 8.400 0"/></g></svg>
  <svg class="a" style="left:1172px;top:17px" width="14" height="9" viewBox="0 0 14 9"><path d="M1 8l6-6.500 6 6.500" fill="none" stroke="#fff" stroke-width="1.300"/></svg>
  <svg class="a" style="left:1194px;top:13px" width="17" height="15" viewBox="0 0 17 15"><path d="M1 5h3l3.500-3.500v12l-3.500-3.500h-3z" fill="none" stroke="#fff" stroke-width="1.100"/><path d="M10 5c1 1.500 1 3.500 0 5M12.300 3c2 3 2 6 0 9" fill="none" stroke="#fff" stroke-width="1.100"/><path d="M14.600 1.500c2.500 4 2.500 8 0 12" fill="none" stroke="#888" stroke-width="1"/></svg>
  <svg class="a" style="left:1218px;top:15px" width="18" height="11" viewBox="0 0 18 11"><rect x="5.500" y="1.500" width="11" height="8" fill="none" stroke="#fff" stroke-width="1.100"/><rect x="16.500" y="4" width="1.500" height="3" fill="#fff"/><rect x="7" y="3" width="3" height="5" fill="#fff"/><path d="M0 5h2v-2h3v5h-3v-2h-2M3 1.500v1.500M4.500 1.500v1.500" stroke="#fff" fill="none"/></svg>
  <svg class="a" style="left:1245px;top:14px" width="15" height="14" viewBox="0 0 15 14"><g fill="none" stroke="#fff" stroke-width="1.200"><path d="M1 13a12 12 0 0 1 12-12" stroke="#999"/><path d="M4 13a9 9 0 0 1 9-9"/><path d="M7.500 13a5.500 5.500 0 0 1 5.500-5.500"/></g><circle cx="12" cy="12" r="1.700" fill="#fff"/></svg>
  <svg class="a" style="left:1266px;top:14px" width="18" height="13" viewBox="0 0 18 13"><path d="M4.500 12.500a4 4 0 0 1-.5-8 5 5 0 0 1 9.500-.5 4.300 4.300 0 0 1 0 8.500z" fill="#fff"/><path d="M9 10.500v-5M6.500 7.500l2.500-2.500 2.500 2.500" stroke="#0B0E14" stroke-width="1.500" fill="none"/></svg>
  <div class="t" style="left:1293px;top:14px;font-size:12px;letter-spacing:-1.2px;color:#fff">ENG</div>
  <div class="t" style="left:1331px;top:5px;font-size:12px;letter-spacing:-.4px;color:#fff">11:28 PM</div>
  <div class="t" style="left:1329px;top:23px;font-size:12px;letter-spacing:-.18px;color:#fff">6/21/2018</div>
  <svg class="a" style="left:1398px;top:11px" width="26" height="24" viewBox="0 0 26 24"><path d="M1 1h15v11h-9l-3 3v-3h-3z" fill="#fff"/><path d="M3.500 4h10M3.500 6.500h10M3.500 9h10" stroke="#0B0E14" stroke-width="1"/><circle cx="16" cy="15.500" r="7" fill="#2B2F36" stroke="#555" stroke-width=".8"/><text x="16" y="19.300" font-family="Liberation Sans, sans-serif" font-weight="bold" font-size="10.500" fill="#fff" text-anchor="middle">5</text></svg>
  <div class="a" style="left:1435px;top:0;width:1px;height:40px;background:#4A4F58"></div>
</div>

<!--DIALOG_S--><div id="dlg" class="a">
<div class="a" style="left:0;top:0;width:534px;height:25px;background:#fff"></div>
<div class="t b12" id="dttl" style="left:4px;top:6px;font-size:12px;letter-spacing:-.23px">Tải tệp cước vận chuyển</div>
<svg class="a" style="left:514px;top:7px" width="11" height="11" viewBox="0 0 11 11"><path d="M.5.500l10 10M10.500.500l-10 10" stroke="#000" stroke-width="1.100"/></svg>
<div class="t b12" id="dlbl" style="left:15px;top:38px;letter-spacing:.25px">Chọn tỉnh/TP:</div>
<div class="combo" style="left:102px;top:33px;width:421px;height:22px;font-size:12px;letter-spacing:-.1px"><span style="left:5px;top:5px">Thái Nguyên</span><svg style="right:5px;top:8px" width="10" height="6" viewBox="0 0 10 6"><path d="M.5.500l4.500 4.500 4.500-4.500" fill="none" stroke="#444" stroke-width="1.100"/></svg></div>
<div class="a" style="left:12px;top:60px;width:511px;height:251px;background:#fff;border:1px solid #828790"></div>
<div class="a" style="left:13px;top:103px;width:509px;height:1px;background:#F0F0F0"></div>
<div class="a" style="left:13px;top:121px;width:509px;height:1px;background:#F0F0F0"></div>
<div class="a" style="left:13px;top:139px;width:509px;height:1px;background:#F0F0F0"></div>
<div class="a" style="left:13px;top:157px;width:509px;height:1px;background:#F0F0F0"></div>
<div class="a" style="left:13px;top:175px;width:509px;height:1px;background:#F0F0F0"></div>
<div class="a" style="left:13px;top:193px;width:509px;height:1px;background:#F0F0F0"></div>
<div class="a" style="left:13px;top:211px;width:509px;height:1px;background:#F0F0F0"></div>
<div class="a" style="left:13px;top:229px;width:509px;height:1px;background:#F0F0F0"></div>
<div class="a" style="left:13px;top:247px;width:509px;height:1px;background:#F0F0F0"></div>
<div class="a" style="left:13px;top:265px;width:509px;height:1px;background:#F0F0F0"></div>
<div class="a" style="left:13px;top:283px;width:509px;height:1px;background:#F0F0F0"></div>
<div class="a" style="left:13px;top:301px;width:509px;height:1px;background:#F0F0F0"></div>
<div class="a" style="left:228px;top:62px;width:1px;height:248px;background:#EDEDED"></div>
<div class="a" style="left:303px;top:62px;width:1px;height:248px;background:#EDEDED"></div>
<div class="a" style="left:383px;top:62px;width:1px;height:248px;background:#EDEDED"></div>
<div class="a" style="left:493px;top:62px;width:1px;height:248px;background:#EDEDED"></div>
<div class="lr" style="left:20px;top:69px">Tên tệp</div>
<div class="lr" style="left:234px;top:69px">Kích thước</div>
<div class="lr" style="left:309px;top:69px">Trạng thái</div>
<div class="lr" style="left:389px;top:69px">Tải xuống</div>
<div class="a" style="left:18px;top:86px;width:475px;height:17px;background:#0078D7"></div>
<div class="a" style="left:228px;top:86px;width:1px;height:17px;background:#D6E9F8"></div>
<div class="a" style="left:303px;top:86px;width:1px;height:17px;background:#D6E9F8"></div>
<div class="a" style="left:383px;top:86px;width:1px;height:17px;background:#D6E9F8"></div>
<div class="lr" style="left:21px;top:90px;color:#fff">ThaiNguyen_QD04_2015.CVC</div>
<div class="lr" style="left:234px;top:90px;color:#fff">2.17KB</div>
<div class="lr" style="left:309px;top:90px;color:#fff">Đã có</div>
<div class="lr" style="left:389px;top:90px;color:#fff">Đã tải xong</div>
<div class="lr" style="left:21px;top:108px;color:#000">ThaiNguyen_QD29_2011.CVC</div>
<div class="lr" style="left:234px;top:108px;color:#000">2.19KB</div>
<div class="lr" style="left:309px;top:108px;color:#000">Đã có</div>
<div class="lr" style="left:21px;top:126px;color:#000">ThaiNguyen_QD610_2008.CVC</div>
<div class="lr" style="left:234px;top:126px;color:#000">2.28KB</div>
<div class="lr" style="left:309px;top:126px;color:#000">Đã có</div>
<div class="a" style="left:12px;top:318px;width:349px;height:22px;background:#06B025;border:1px solid #BCBCBC"></div>
<div class="a b12" style="left:368px;top:318px;width:73px;height:21px;background:#E1E1E1;border:1px solid #ADADAD;text-align:center;line-height:19px;letter-spacing:-.05px">Tải xuống</div>
<div class="a b12" style="left:450px;top:318px;width:73px;height:21px;background:#CCCCCC;border:1px solid #BFBFBF;color:#8A8A8A;text-align:center;line-height:19px;padding-right:4px">Hủy bỏ</div>
</div>
<svg class="a" style="left:0;top:0;pointer-events:none" width="1440" height="860" viewBox="0 0 1440 860"><g fill="none" stroke="#ED1C24" stroke-width="4.800">
<ellipse id="e2" cx="951.900" cy="299.600" rx="77.600" ry="13.200"/>
<ellipse id="e3" cx="717" cy="343.500" rx="275.600" ry="20.400"/>
<ellipse id="e4" cx="853.700" cy="581.900" rx="51.900" ry="35.100"/>
<ellipse id="e1" cx="1004.150" cy="801.650" rx="91.450" ry="36.250"/>
</g></svg>
<div class="step" id="s2" style="left:869px;top:258px">Bước 2</div>
<div class="step" id="s3" style="left:813px;top:369px">Bước 3</div>
<div class="step" id="s4" style="left:769px;top:523px">Bước 4</div>
<div class="step" id="s1" style="left:895px;top:728px">Bước 1</div>
<!--DIALOG_E-->

</body>
</html>
